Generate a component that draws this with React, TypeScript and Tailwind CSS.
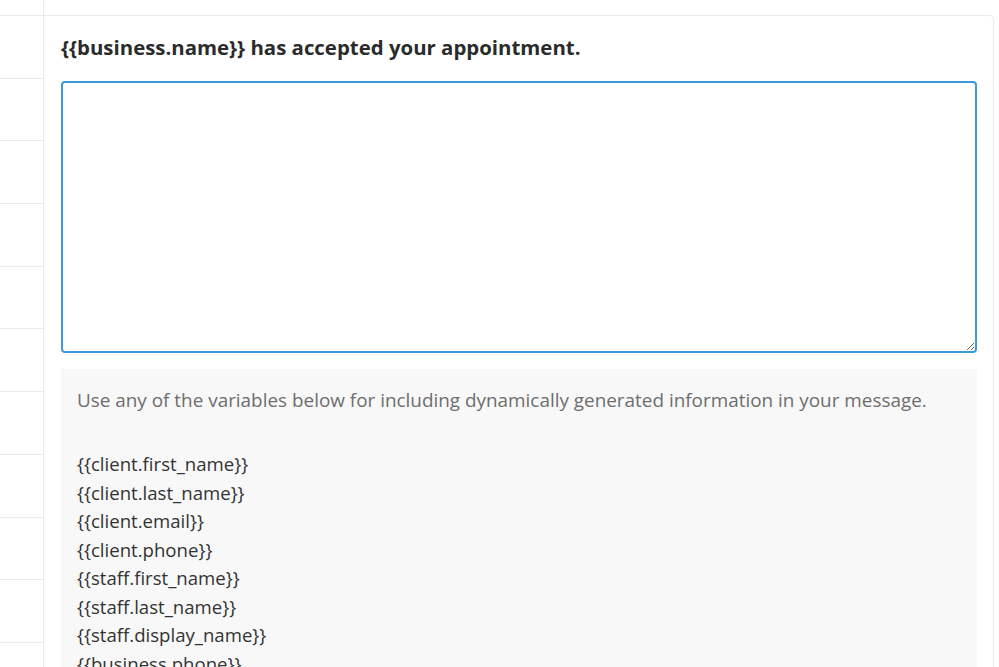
const variables = [
  "{{client.first_name}}",
  "{{client.last_name}}",
  "{{client.email}}",
  "{{client.phone}}",
  "{{staff.first_name}}",
  "{{staff.last_name}}",
  "{{staff.display_name}}",
  "{{business.phone}}",
  "{{business.name}}",
  "{{business.address}}",
];

const SideRows = () => (
  <div className="w-[44px] shrink-0 border-r border-[#ebebeb]">
    <div className="h-[15px]" />
    {Array.from({ length: 11 }).map((_, i) => (
      <div key={i} className="h-[62.7px] border-t border-[#ebebeb]" />
    ))}
  </div>
);

export default function App() {
  return (
    <div
      className="flex h-[667px] w-[999px] overflow-hidden bg-white text-[#2b2b2b]"
      style={{ fontFamily: "'Open Sans', Lato, sans-serif" }}
    >
      <SideRows />
      <div className="mt-[15px] mr-[5px] flex-1 rounded-tr-[5px] border-t border-r border-[#ebebeb] pl-[17px] pr-[16px]">
        <h2 className="mt-[17px] text-[20.4px] leading-[28px] font-bold text-[#2b2b2b]">
          {"{{business.name}} has accepted your appointment."}
        </h2>
        <textarea className="mt-[20px] block h-[272px] w-full rounded-[4px] border-2 border-[#3d9ad6] outline-none" />
        <div className="mt-[16px] bg-[#f8f8f8] px-[16px] pt-[18px] pb-6">
          <p className="text-[18.9px] leading-[26px] text-[#6e6e6e]">
            Use any of the variables below for including dynamically generated information in your message.
          </p>
          <ul className="mt-[37px] text-[18.6px] leading-[28.5px] text-[#333333]">
            {variables.map((v) => (
              <li key={v}>{v}</li>
            ))}
          </ul>
        </div>
      </div>
    </div>
  );
}
